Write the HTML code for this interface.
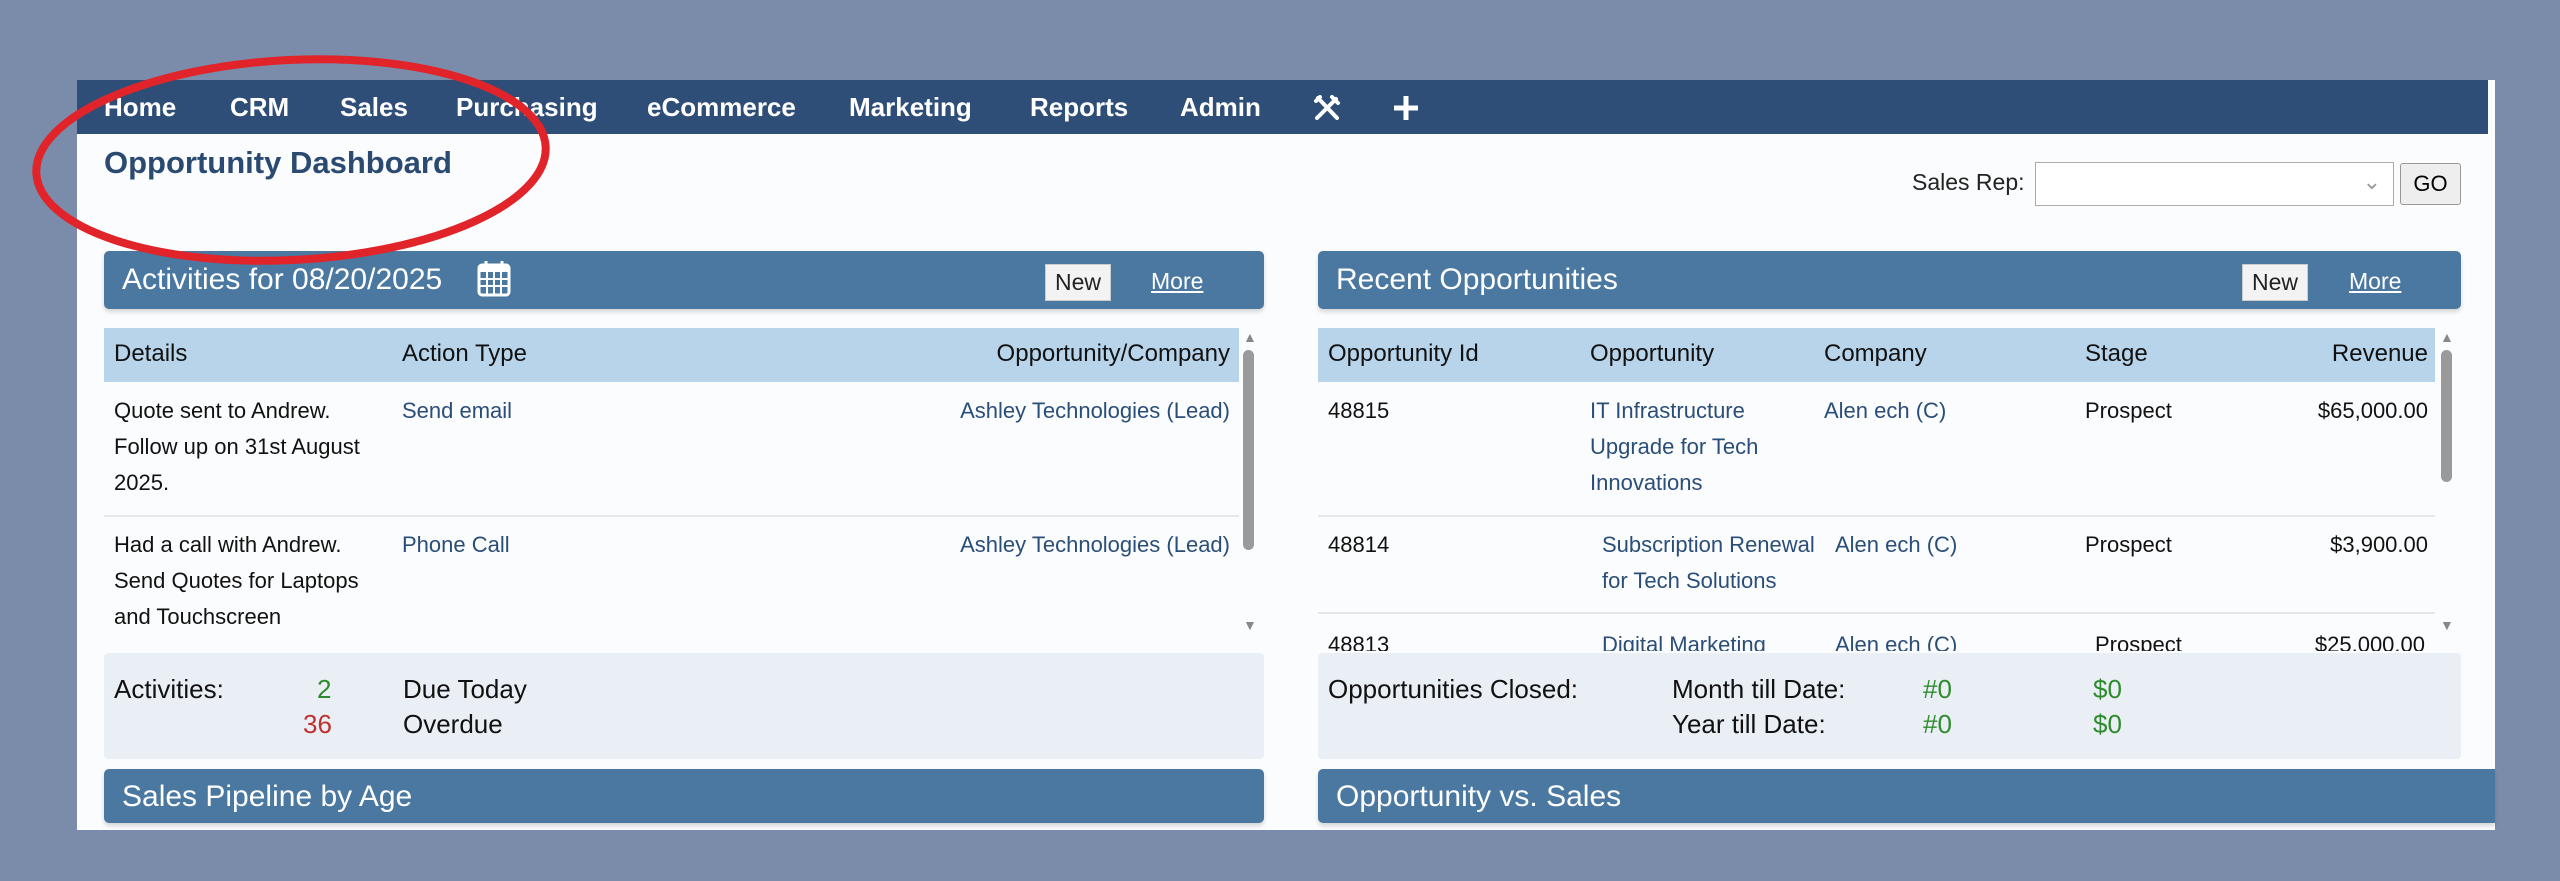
<!DOCTYPE html>
<html><head><meta charset="utf-8"><style>
*{margin:0;padding:0;box-sizing:border-box}
body{width:2560px;height:881px;background:#7a8ca9;font-family:"Liberation Sans",sans-serif;position:relative;overflow:hidden}
.a{position:absolute;white-space:nowrap}
#page{position:absolute;left:77px;top:80px;width:2418px;height:750px;background:#fbfcfd}
#nav{position:absolute;left:77px;top:80px;width:2411px;height:54px;background:#2e4e78}
.nav{color:#fff;font-weight:bold;font-size:26px;top:92px}
.hdr{background:#4a78a1;border-radius:5px;height:58px;box-shadow:0 3px 4px rgba(0,0,0,.15)}
.ht{color:#fff;font-size:30px;top:12px}
.btn{background:#f3f3f3;border:1px solid #ccc;color:#222;font-size:23px;padding:4px 9px;top:13px}
.more{color:#fff;text-decoration:underline;font-size:23px;top:17px}
.th{background:#b8d4ea;height:54px}
.thc{font-size:24px;color:#111;top:12px}
.td{font-size:22px;color:#111;line-height:36px}
.lk{color:#2a4e78}
.sum{background:#e9eff5;border-radius:4px;height:106px}
.s{font-size:26px;color:#111;line-height:35px}
.g{color:#2e8b2e}.r{color:#c0302e}
.sep{height:2px;background:#e3e6ea}
.sb{background:#9a9a9a;border-radius:6px;width:11px}
</style></head><body>
<div id="page"></div>
<div id="nav"></div>
<div class="a nav" style="left:104px">Home</div>
<div class="a nav" style="left:230px">CRM</div>
<div class="a nav" style="left:340px">Sales</div>
<div class="a nav" style="left:456px">Purchasing</div>
<div class="a nav" style="left:647px">eCommerce</div>
<div class="a nav" style="left:849px">Marketing</div>
<div class="a nav" style="left:1030px">Reports</div>
<div class="a nav" style="left:1180px">Admin</div>
<svg class="a" style="left:1312px;top:93px" width="30" height="30" viewBox="0 0 30 30"><path d="M5 25 L24 6 M20 4 L26 10 M6 5 L25 25 M4 8 L8 4" stroke="#fff" stroke-width="4" stroke-linecap="round" fill="none"/></svg>
<svg class="a" style="left:1392px;top:94px" width="28" height="28"><path d="M14 2V26M2 14H26" stroke="#fff" stroke-width="5"/></svg>

<div class="a" style="left:104px;top:145px;font-size:31px;font-weight:bold;color:#2b4a72">Opportunity Dashboard</div>

<div class="a" style="left:1912px;top:169px;font-size:23px;color:#222">Sales Rep:</div>
<div class="a" style="left:2035px;top:162px;width:359px;height:44px;border:1px solid #aaa;background:#fff"><span class="a" style="right:12px;top:6px;color:#999;font-size:22px">&#8964;</span></div>
<div class="a" style="left:2400px;top:163px;width:61px;height:42px;border:1px solid #999;background:#eee;font-size:22px;text-align:center;line-height:40px;border-radius:3px">GO</div>

<!-- left panel -->
<div class="a hdr" style="left:104px;top:251px;width:1160px"></div>
<div class="a ht" style="left:122px;top:263px">Activities for 08/20/2025</div>
<svg class="a" style="left:477px;top:259px" width="34" height="38" viewBox="0 0 34 38"><rect x="2" y="6" width="30" height="30" rx="3" fill="none" stroke="#fff" stroke-width="3"/><rect x="2" y="6" width="30" height="7" fill="#fff"/><path d="M9 2v8M25 2v8" stroke="#fff" stroke-width="3"/><path d="M2 20H32M2 27H32M10 13V36M17 13V36M24 13V36" stroke="#fff" stroke-width="2"/></svg>
<div class="a btn" style="left:1045px;top:264px">New</div>
<div class="a more" style="left:1151px;top:268px">More</div>

<div class="a th" style="left:104px;top:328px;width:1135px"></div>
<div class="a thc" style="left:114px;top:340px">Details</div>
<div class="a thc" style="left:402px;top:340px">Action Type</div>
<div class="a thc" style="right:1330px;top:340px">Opportunity/Company</div>
<div class="a" style="left:1243px;top:329px;color:#888;font-size:14px">&#9650;</div>
<div class="a sb" style="left:1243px;top:350px;height:200px"></div>
<div class="a" style="left:1243px;top:617px;color:#888;font-size:14px">&#9660;</div>
<div class="a td" style="left:114px;top:393px">Quote sent to Andrew.<br>Follow up on 31st August<br>2025.</div>
<div class="a td lk" style="left:402px;top:393px">Send email</div>
<div class="a td lk" style="right:1330px;top:393px">Ashley Technologies (Lead)</div>
<div class="a sep" style="left:104px;top:515px;width:1135px"></div>
<div class="a td" style="left:114px;top:527px">Had a call with Andrew.<br>Send Quotes for Laptops<br>and Touchscreen</div>
<div class="a td lk" style="left:402px;top:527px">Phone Call</div>
<div class="a td lk" style="right:1330px;top:527px">Ashley Technologies (Lead)</div>

<div class="a sum" style="left:104px;top:653px;width:1160px"></div>
<div class="a s lk" style="left:114px;top:672px">Activities:</div>
<div class="a s g" style="left:317px;top:672px">2</div>
<div class="a s r" style="left:303px;top:707px">36</div>
<div class="a s" style="left:403px;top:672px">Due Today<br>Overdue</div>

<div class="a hdr" style="left:104px;top:769px;width:1160px;height:54px"></div>
<div class="a ht" style="left:122px;top:780px">Sales Pipeline by Age</div>

<!-- right panel -->
<div class="a hdr" style="left:1318px;top:251px;width:1143px"></div>
<div class="a ht" style="left:1336px;top:263px">Recent Opportunities</div>
<div class="a btn" style="left:2242px;top:264px">New</div>
<div class="a more" style="left:2349px;top:268px">More</div>

<div class="a th" style="left:1318px;top:328px;width:1117px"></div>
<div class="a thc" style="left:1328px;top:340px">Opportunity Id</div>
<div class="a thc" style="left:1590px;top:340px">Opportunity</div>
<div class="a thc" style="left:1824px;top:340px">Company</div>
<div class="a thc" style="left:2085px;top:340px">Stage</div>
<div class="a thc" style="right:132px;top:340px">Revenue</div>
<div class="a" style="left:2440px;top:329px;color:#888;font-size:14px">&#9650;</div>
<div class="a sb" style="left:2441px;top:350px;height:132px"></div>
<div class="a" style="left:2440px;top:617px;color:#888;font-size:14px">&#9660;</div>
<div class="a td" style="left:1328px;top:393px">48815</div>
<div class="a td lk" style="left:1590px;top:393px">IT Infrastructure<br>Upgrade for Tech<br>Innovations</div>
<div class="a td lk" style="left:1824px;top:393px">Alen ech (C)</div>
<div class="a td" style="left:2085px;top:393px">Prospect</div>
<div class="a td" style="right:132px;top:393px">$65,000.00</div>
<div class="a sep" style="left:1318px;top:515px;width:1117px"></div>
<div class="a td" style="left:1328px;top:527px">48814</div>
<div class="a td lk" style="left:1602px;top:527px">Subscription Renewal<br>for Tech Solutions</div>
<div class="a td lk" style="left:1835px;top:527px">Alen ech (C)</div>
<div class="a td" style="left:2085px;top:527px">Prospect</div>
<div class="a td" style="right:132px;top:527px">$3,900.00</div>
<div class="a sep" style="left:1318px;top:612px;width:1117px"></div>
<div class="a" style="left:1318px;top:620px;width:1117px;height:31px;overflow:hidden">
<div class="a td" style="left:10px;top:7px">48813</div>
<div class="a td lk" style="left:284px;top:7px">Digital Marketing</div>
<div class="a td lk" style="left:517px;top:7px">Alen ech (C)</div>
<div class="a td" style="left:777px;top:7px">Prospect</div>
<div class="a td" style="right:10px;top:7px">$25,000.00</div>
</div>

<div class="a sum" style="left:1318px;top:653px;width:1143px"></div>
<div class="a s lk" style="left:1328px;top:672px">Opportunities Closed:</div>
<div class="a s" style="left:1672px;top:672px">Month till Date:<br>Year till Date:</div>
<div class="a s g" style="left:1923px;top:672px">#0<br>#0</div>
<div class="a s g" style="left:2093px;top:672px">$0<br>$0</div>

<div class="a hdr" style="left:1318px;top:769px;width:1177px;height:54px;border-radius:5px 0 0 5px"></div>
<div class="a ht" style="left:1336px;top:780px">Opportunity vs. Sales</div>

<svg class="a" style="left:0;top:0" width="700" height="300"><ellipse cx="291" cy="160" rx="255" ry="100" transform="rotate(-3 291 160)" fill="none" stroke="#e0242a" stroke-width="8"/></svg>
</body></html>
